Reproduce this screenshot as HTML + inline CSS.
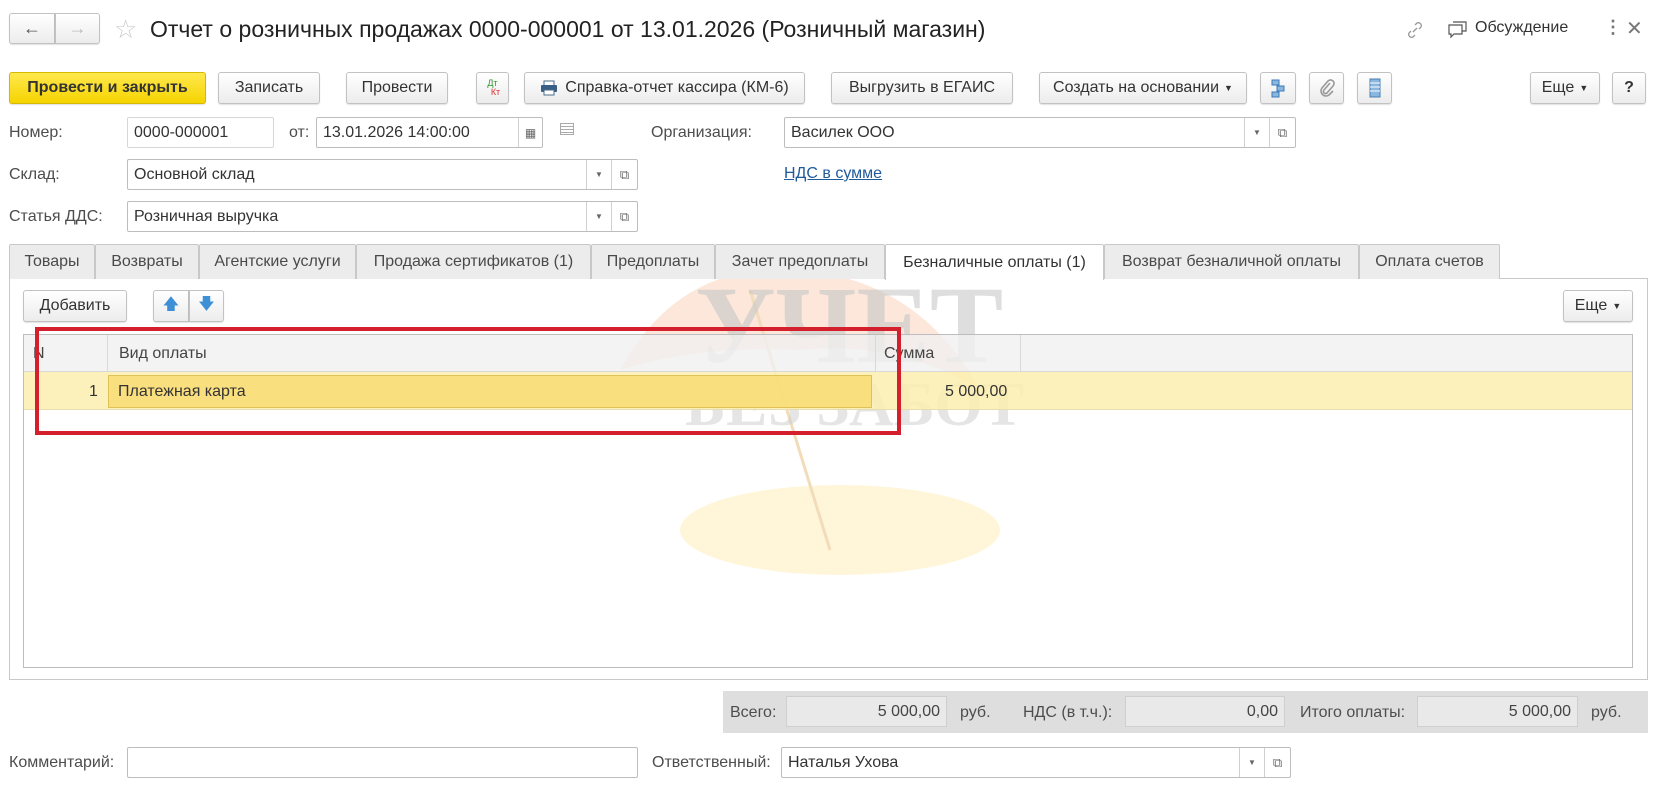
<!DOCTYPE html>
<html><head><meta charset="utf-8">
<style>
*{box-sizing:border-box;margin:0;padding:0}
body{width:1654px;height:787px;background:#fff;font-family:"Liberation Sans",Arial,sans-serif;font-size:16px;color:#333;position:relative;overflow:hidden}
.a{position:absolute}
.btn{position:absolute;height:32px;border:1px solid #c2c2c2;border-radius:3px;background:linear-gradient(#fff,#ececec);box-shadow:0 1px 1px rgba(0,0,0,.12);display:flex;align-items:center;justify-content:center;color:#333;white-space:nowrap}
.inp{position:absolute;height:31px;border:1px solid #bdbdbd;border-radius:2px;background:#fff;padding-left:6px;display:flex;align-items:center;white-space:nowrap}
.lbl{position:absolute;color:#4d4d4d;white-space:nowrap}
.dd{position:absolute;top:0;bottom:0;border-left:1px solid #d0d0d0;display:flex;align-items:center;justify-content:center;font-size:8px;color:#666}
.tab{position:absolute;top:244px;height:35px;border:1px solid #c8c8c8;border-bottom:none;background:#ececec;display:flex;align-items:center;justify-content:center;color:#4a4a4a;white-space:nowrap;border-radius:2px 2px 0 0}
.tot{position:absolute;height:31px;border:1px solid #cfcfcf;background:#e9e9e9;display:flex;align-items:center;justify-content:flex-end;padding-right:6px;color:#444}
</style></head><body>

<div class="btn" style="left:9px;top:13px;width:46px;height:31px;border-radius:3px 0 0 3px;font-size:18px;color:#555">&#8592;</div>
<div class="btn" style="left:55px;top:13px;width:45px;height:31px;border-radius:0 3px 3px 0;font-size:18px;color:#bbb">&#8594;</div>
<div class="a" style="left:114px;top:14px;font-size:26px;color:#ccc">&#9734;</div>
<div class="a" style="left:150px;top:16px;font-size:23px;color:#222">Отчет о розничных продажах 0000-000001 от 13.01.2026 (Розничный магазин)</div>
<svg class="a" style="left:1404px;top:19px" width="22" height="22" viewBox="0 0 22 22"><g fill="none" stroke="#999" stroke-width="1.3"><path d="M9 13l4-4"/><path d="M11 6l2-2a3 3 0 014 4l-2 2"/><path d="M11 16l-2 2a3 3 0 01-4-4l2-2"/></g></svg>
<svg class="a" style="left:1447px;top:19px" width="22" height="20" viewBox="0 0 22 20"><g fill="none" stroke="#555" stroke-width="1.2"><path d="M6 3h13v9h-4"/><path d="M2 6h13v9H7l-3 3v-3H2z"/></g></svg>
<div class="a" style="left:1475px;top:19px;font-size:16px;color:#333">Обсуждение</div>
<div class="a" style="left:1604px;top:17px;font-size:18px;color:#777;font-weight:bold">&#8942;</div>
<div class="a" style="left:1626px;top:16px;font-size:20px;color:#777">&#10005;</div>

<div class="btn" style="left:9px;top:72px;width:197px;background:linear-gradient(#ffe84d,#f5d400);border-color:#d6b800;font-weight:bold;color:#333">Провести и закрыть</div>
<div class="btn" style="left:218px;top:72px;width:102px">Записать</div>
<div class="btn" style="left:346px;top:72px;width:102px">Провести</div>
<div class="btn" style="left:476px;top:72px;width:33px;flex-direction:column;font-size:9px;line-height:9px"><span style="color:#2a9a2a">Дт</span><span style="color:#d33;margin-left:6px">Кт</span></div>
<div class="btn" style="left:524px;top:72px;width:281px"><svg width="18" height="16" viewBox="0 0 18 16" style="margin-right:7px"><rect x="4" y="1" width="10" height="5" fill="#fff" stroke="#4a6b8a"/><rect x="1" y="5" width="16" height="7" rx="1" fill="#3a5f85"/><rect x="4" y="10" width="10" height="5" fill="#fff" stroke="#4a6b8a"/></svg>Справка-отчет кассира (КМ-6)</div>
<div class="btn" style="left:831px;top:72px;width:182px">Выгрузить в ЕГАИС</div>
<div class="btn" style="left:1039px;top:72px;width:208px">Создать на основании <span style="font-size:9px;margin-left:5px">&#9660;</span></div>
<div class="btn" style="left:1260px;top:72px;width:36px"><svg width="18" height="20" viewBox="0 0 18 20"><g fill="#8ab7df" stroke="#3c7ab8" stroke-width="1"><rect x="3" y="2" width="7" height="5"/><rect x="8" y="8" width="7" height="5"/><rect x="3" y="14" width="7" height="5"/></g></svg></div>
<div class="btn" style="left:1309px;top:72px;width:35px"><svg width="16" height="18" viewBox="0 0 16 18"><path d="M11 4L5 11a2 2 0 003 3l6-7a3.5 3.5 0 00-5-5L3 9a5 5 0 007 7l4-4" fill="none" stroke="#999" stroke-width="1.6"/></svg></div>
<div class="btn" style="left:1357px;top:72px;width:35px"><svg width="12" height="20" viewBox="0 0 12 20"><rect x="1" y="1" width="10" height="18" fill="#8ab7df" stroke="#4a7fb2"/><path d="M1 5h10M1 9h10M1 13h10" stroke="#fff"/></svg></div>
<div class="btn" style="left:1530px;top:72px;width:70px">Еще <span style="font-size:9px;margin-left:5px">&#9660;</span></div>
<div class="btn" style="left:1612px;top:72px;width:34px;font-weight:bold">?</div>

<div class="lbl" style="left:9px;top:124px">Номер:</div>
<div class="inp" style="left:127px;top:117px;width:147px;border-color:#d6d6d6">0000-000001</div>
<div class="lbl" style="left:289px;top:124px">от:</div>
<div class="inp" style="left:316px;top:117px;width:227px">13.01.2026 14:00:00<div class="dd" style="right:0;width:24px;font-size:12px">&#9638;</div></div>
<div class="a" style="left:560px;top:123px;width:14px;height:12px;border:1px solid #aaa;background:repeating-linear-gradient(#fff 0 2px,#aaa 2px 3px)"></div>
<div class="lbl" style="left:651px;top:124px">Организация:</div>
<div class="inp" style="left:784px;top:117px;width:512px">Василек ООО<div class="dd" style="right:26px;width:25px">&#9660;</div><div class="dd" style="right:0;width:26px;font-size:13px">&#10697;</div></div>

<div class="lbl" style="left:9px;top:166px">Склад:</div>
<div class="inp" style="left:127px;top:159px;width:511px">Основной склад<div class="dd" style="right:26px;width:25px">&#9660;</div><div class="dd" style="right:0;width:26px;font-size:13px">&#10697;</div></div>
<div class="a" style="left:784px;top:165px;color:#1f5a9a;text-decoration:underline">НДС в сумме</div>

<div class="lbl" style="left:9px;top:208px">Статья ДДС:</div>
<div class="inp" style="left:127px;top:201px;width:511px">Розничная выручка<div class="dd" style="right:26px;width:25px">&#9660;</div><div class="dd" style="right:0;width:26px;font-size:13px">&#10697;</div></div>

<div class="a" style="left:9px;top:278px;width:1639px;height:402px;border:1px solid #c8c8c8"></div>

<svg class="a" style="left:600px;top:250px;opacity:.55" width="440" height="330" viewBox="0 0 440 330">
<ellipse cx="240" cy="280" rx="160" ry="45" fill="#fde58a" opacity=".6"/>
<path d="M20 120 Q80 10 200 20 Q320 30 380 140 Q300 90 200 100 Q100 95 20 120z" fill="#f3a06a" opacity=".45"/>
<path d="M150 40 L230 300" stroke="#e8c080" stroke-width="3"/>
<text x="95" y="112" font-family="Liberation Serif,serif" font-size="110" font-weight="bold" fill="#999" opacity=".6">УЧЕТ</text>
<text x="85" y="175" font-family="Liberation Serif,serif" font-size="62" font-weight="bold" fill="#aaa" opacity=".55">БЕЗ ЗАБОТ</text>
</svg>

<div class="tab" style="left:9px;width:86px">Товары</div>
<div class="tab" style="left:95px;width:104px">Возвраты</div>
<div class="tab" style="left:199px;width:157px">Агентские услуги</div>
<div class="tab" style="left:356px;width:235px">Продажа сертификатов (1)</div>
<div class="tab" style="left:591px;width:124px">Предоплаты</div>
<div class="tab" style="left:715px;width:170px">Зачет предоплаты</div>
<div class="tab" style="left:885px;width:219px;background:#fff;height:36px;color:#333">Безналичные оплаты (1)</div>
<div class="tab" style="left:1104px;width:255px">Возврат безналичной оплаты</div>
<div class="tab" style="left:1359px;width:141px">Оплата счетов</div>

<div class="btn" style="left:23px;top:290px;width:104px">Добавить</div>
<div class="btn" style="left:153px;top:290px;width:36px;border-radius:3px 0 0 3px;color:#3d8fd6;font-size:16px">&#129093;</div>
<div class="btn" style="left:189px;top:290px;width:35px;border-radius:0 3px 3px 0;color:#3d8fd6;font-size:16px">&#129095;</div>
<div class="btn" style="left:1563px;top:290px;width:70px">Еще <span style="font-size:9px;margin-left:5px">&#9660;</span></div>

<div class="a" style="left:23px;top:334px;width:1610px;height:334px;border:1px solid #bdbdbd"></div>
<div class="a" style="left:24px;top:335px;width:1608px;height:37px;background:rgba(240,240,240,.8);border-bottom:1px solid #d8d8d8"></div>
<div class="a" style="left:107px;top:335px;width:1px;height:37px;background:#d8d8d8"></div>
<div class="a" style="left:875px;top:335px;width:1px;height:37px;background:#d8d8d8"></div>
<div class="a" style="left:1020px;top:335px;width:1px;height:37px;background:#d8d8d8"></div>
<div class="a" style="left:33px;top:345px;color:#444">N</div>
<div class="a" style="left:119px;top:345px;color:#444">Вид оплаты</div>
<div class="a" style="left:884px;top:345px;color:#444">Сумма</div>
<div class="a" style="left:24px;top:372px;width:1608px;height:38px;background:rgba(253,238,175,.85);border-bottom:1px solid #e8dcb0"></div>
<div class="a" style="left:108px;top:375px;width:764px;height:33px;background:rgba(250,221,120,.9);border:1px solid #e0c058"></div>
<div class="a" style="left:89px;top:383px">1</div>
<div class="a" style="left:118px;top:383px">Платежная карта</div>
<div class="a" style="left:945px;top:383px">5 000,00</div>

<div class="a" style="left:35px;top:327px;width:866px;height:108px;border:4px solid #d3202c"></div>

<div class="a" style="left:723px;top:691px;width:925px;height:42px;background:#dedede"></div>
<div class="lbl" style="left:730px;top:704px">Всего:</div>
<div class="tot" style="left:786px;top:696px;width:161px">5 000,00</div>
<div class="lbl" style="left:960px;top:704px">руб.</div>
<div class="lbl" style="left:1023px;top:704px">НДС (в т.ч.):</div>
<div class="tot" style="left:1125px;top:696px;width:160px">0,00</div>
<div class="lbl" style="left:1300px;top:704px">Итого оплаты:</div>
<div class="tot" style="left:1417px;top:696px;width:161px">5 000,00</div>
<div class="lbl" style="left:1591px;top:704px">руб.</div>

<div class="lbl" style="left:9px;top:754px">Комментарий:</div>
<div class="inp" style="left:127px;top:747px;width:511px"></div>
<div class="lbl" style="left:652px;top:754px">Ответственный:</div>
<div class="inp" style="left:781px;top:747px;width:510px">Наталья Ухова<div class="dd" style="right:26px;width:25px">&#9660;</div><div class="dd" style="right:0;width:26px;font-size:13px">&#10697;</div></div>

</body></html>
